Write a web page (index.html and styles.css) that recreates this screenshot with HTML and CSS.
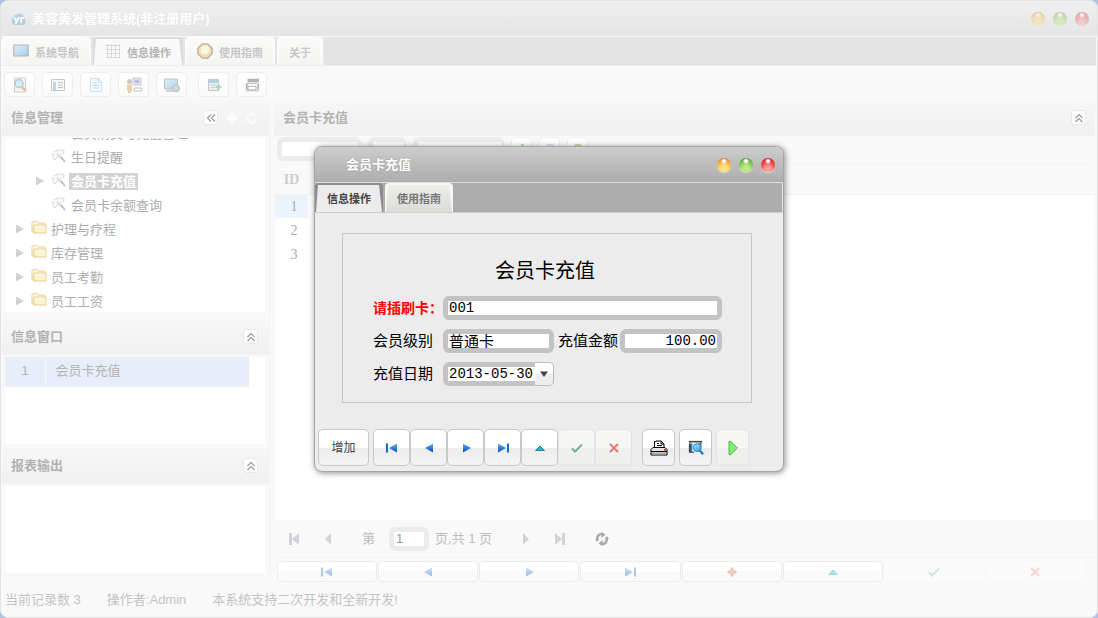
FILE: index.html
```html
<!DOCTYPE html>
<html lang="zh-CN">
<head>
    <meta charset="UTF-8">
    <meta name="viewport" content="width=device-width, initial-scale=1.0">
    <title>美容美发管理系统</title>
    <link rel="stylesheet" href="styles.css">
</head>
<body>

<!-- Shared icons -->
<svg class="defs" aria-hidden="true">
    <defs>
        <linearGradient id="blue" x1="0" y1="0" x2="0" y2="1"><stop offset="0" stop-color="#5cb8f5"/><stop offset="1" stop-color="#0848b8"/></linearGradient>
        <linearGradient id="sky" x1="0" y1="0" x2="1" y2="1"><stop offset="0" stop-color="#b9e6fb"/><stop offset="1" stop-color="#2b93d6"/></linearGradient>
        <linearGradient id="gold" x1="0" y1="0" x2="0" y2="1"><stop offset="0" stop-color="#fffbd0"/><stop offset="1" stop-color="#fbe08a"/></linearGradient>
    </defs>
    <symbol id="i-first" viewBox="0 0 16 16"><path d="M2 3.5h2v9H2z" fill="#1668cc"/><path d="M13 3.5v9L5 8z" fill="url(#blue)"/></symbol>
    <symbol id="i-prev" viewBox="0 0 16 16"><path d="M12 3.5v9L4 8z" fill="url(#blue)"/></symbol>
    <symbol id="i-next" viewBox="0 0 16 16"><path d="M5 3.5v9L13 8z" fill="url(#blue)"/></symbol>
    <symbol id="i-last" viewBox="0 0 16 16"><path d="M12 3.5h2v9h-2z" fill="#1668cc"/><path d="M3 3.5v9L11 8z" fill="url(#blue)"/></symbol>
    <symbol id="i-up" viewBox="0 0 16 16"><path d="M3.5 10.5h9L8 6z" fill="#19b5c4" stroke="#087889" stroke-width=".8"/></symbol>
    <symbol id="i-plus" viewBox="0 0 16 16"><path d="M7 4h2v3h3v2H9v3H7V9H4V7h3z" fill="#f0915a" stroke="#d8401c"/></symbol>
    <symbol id="i-check" viewBox="0 0 16 16"><path d="M3 8.5l3 3L13 4.5" fill="none" stroke="#258a48" stroke-width="2"/></symbol>
    <symbol id="i-cross" viewBox="0 0 16 16"><path d="M4 4l8 8M12 4l-8 8" fill="none" stroke="#d92a1c" stroke-width="2"/></symbol>
    <symbol id="i-search" viewBox="0 0 18 18">
        <path d="M1 1h15v2H1z" fill="#444"/><path d="M3 3h12v10H3z" fill="#fff"/><path d="M1 4h3v10H1zM13 3h2v4h-2z" fill="#3a4046"/><path d="M3 4h2v9H3z" fill="#2789cf"/><path d="M2 13h5v1.5H2z" fill="#555"/>
        <circle cx="10.500" cy="8.500" r="4.500" fill="url(#sky)" stroke="#1876ba"/><path d="M13.500 12l3.500 4" stroke="#1978bd" stroke-width="2.500"/>
    </symbol>
    <symbol id="i-find" viewBox="0 0 16 16"><path d="M2.500 1h11v14h-11z" fill="#eee" stroke="#888"/><circle cx="7" cy="6.500" r="4" fill="#9bdcf5" stroke="#4b7da1" stroke-width="1.500"/><path d="M10 10l4 4" stroke="#d35b28" stroke-width="2.500"/></symbol>
    <symbol id="i-list" viewBox="0 0 16 16"><path d="M1.500 2.500h13v11h-13z" fill="#f5f5f5" stroke="#777"/><path d="M3 5h3v8H3z" fill="#5b9dd0"/><path d="M8 5.500h5M8 8h5M8 10.500h5" stroke="#777"/></symbol>
    <symbol id="i-doc" viewBox="0 0 16 16"><path d="M2.500 1.500h8l3 3v10h-11z" fill="#e9f6ff" stroke="#69bdf0"/><path d="M10 1.500v3.500h3.500M5 6h4M5 8.500h6M5 11h6" fill="none" stroke="#4aa7de"/></symbol>
    <symbol id="i-user" viewBox="0 0 16 16"><path d="M7 1h8v7H7z" fill="#e5e5e5" stroke="#777"/><path d="M8.500 2.500h5v4h-5z" fill="#6b56e0"/><path d="M8 11h7.500v3H8z" fill="#eee" stroke="#777"/><circle cx="3.500" cy="4.500" r="2.500" fill="#777"/><path d="M1 7.500h5V14H5v2H2v-2H1z" fill="#c99433"/></symbol>
    <symbol id="i-screen" viewBox="0 0 16 16"><path d="M.8 2h14.400v11H.8z" fill="url(#sky)" stroke="#555" stroke-width="1.200"/></symbol>
    <symbol id="i-globe" viewBox="0 0 16 16"><path d="M.5 2h13v10H.5z" fill="url(#sky)" stroke="#666"/><path d="M2 14h7" stroke="#777" stroke-width="1.500"/><circle cx="12" cy="11.500" r="3.500" fill="#57a7a3" stroke="#8b58a0"/><path d="M10 11l2-2 1 4z" fill="#e6bf39"/></symbol>
    <symbol id="i-sheet" viewBox="0 0 16 16"><path d="M2.500 2.500h10v11h-10z" fill="#ddd" stroke="#777"/><path d="M2 2h11v4H2z" fill="#438eb6"/><path d="M4 8h6M4 10.500h5" stroke="#888"/><path d="M12.500 7v6M9.500 10h6" stroke="#32a850" stroke-width="2"/></symbol>
    <symbol id="i-window" viewBox="0 0 18 16"><path d="M4 1h13v4H4z" fill="#444"/><path d="M2 6h14v1H2zM2 7h2v6H2zM15 7h2v6h-2z" fill="#444"/><path d="M4.500 9.500h9v4h-9z" fill="#fff" stroke="#333"/><path d="M2 14h15v1H2z" fill="#555"/></symbol>
    <symbol id="i-grid" viewBox="0 0 16 16"><path d="M1 2.500h14M1 6.500h14M1 10.500h14M1 14.500h14M2.500 1v14M6.500 1v14M10.500 1v14M14.500 1v14" stroke="#999" stroke-width=".8"/></symbol>
    <symbol id="i-help" viewBox="0 0 18 18"><path d="M6 1h6l5 5v6l-5 5H6l-5-5V6z" fill="#f5b93e" stroke="#4b4238" stroke-width="1.500"/><circle cx="9" cy="8" r="5" fill="#fff4cd"/></symbol>
    <symbol id="i-folder" viewBox="0 0 16 16"><path d="M1 11.500V3l1-1.500h4L7.500 3H14v9.500H3z" fill="url(#gold)" stroke="#d29b35"/><path d="M3 5h12v8H3z" fill="url(#gold)" stroke="#d29b35"/></symbol>
    <symbol id="i-tool" viewBox="0 0 16 16"><path d="M3 4l2-2 2 1 2-2 2 2 2-1v3l-3 1-2 3-3 1-1 2-2-2 1-2-2-1z" fill="#f4f4f4" stroke="#999" stroke-dasharray="2 1"/><path d="M6 6l5 5" stroke="#aaa" stroke-width="1.500"/><path d="M10 9l4 5" stroke="#8a50dd" stroke-width="1.500"/></symbol>
    <symbol id="i-chevrons" viewBox="0 0 10 10"><path d="M1.500 5L5 1.500 8.500 5M1.500 9L5 5.500 8.500 9" fill="none" stroke="#666" stroke-width="1.200"/></symbol>
    <symbol id="i-chevleft" viewBox="0 0 10 10"><path d="M5 1.500L1.500 5 5 8.500M9 1.500L5.500 5 9 8.500" fill="none" stroke="#666" stroke-width="1.200"/></symbol>
    <symbol id="i-caret" viewBox="0 0 8 10"><path d="M0 0.500L8 5 0 9.500z" fill="currentColor"/></symbol>
    <symbol id="i-refresh" viewBox="0 0 14 14"><path d="M8 2C4 1.500 2 4 2 7.500M6 12c4 .5 6-2 6-5.500" fill="none" stroke="currentColor" stroke-width="2.500"/><path d="M6.500 0l4 2.500-4 3.500zM7.500 14l-4-2.500 4-3.500zM0 7h4.500L2 10zM14 7H9.500L12 4z" fill="currentColor"/></symbol>
    <symbol id="i-print" viewBox="0 0 18 16"><path d="M4.500 7V1.500h2M6 1h5l3 3v3" fill="#fff" stroke="#000"/><path d="M11 1v3h3M7 3.500h2M7 5.500h5" fill="none" stroke="#000"/><path d="M3 7.500h12l2 2v5.500H1V9.500z" fill="#e4e4e4" stroke="#000"/><path d="M1 11.500h16" stroke="#000"/><path d="M2 12.500h14v2H2z" fill="#aaa"/><path d="M14 9h2v1.500h-2z" fill="#e32222"/></symbol>
    <symbol id="i-play" viewBox="0 0 12 18"><path d="M1.500 1.500h2L11 9l-7.500 7.500h-2z" fill="#7af26d" stroke="#5c9b57"/></symbol>
</svg>

<div class="app">
    <header class="titlebar">
        <svg class="logo" viewBox="0 0 16 14" aria-hidden="true"><path d="M4 13a4 4 0 0 1-2-7 3 3 0 0 1 4-3 4 4 0 0 1 7 3 4 4 0 0 1-1 7z" fill="#abd0e5"/><path d="M3 5l2.500 4M8 5l-3.500 7M10 11V6h3" fill="none" stroke="#fff" stroke-width="1.800"/></svg>
        <h1>美容美发管理系统(非注册用户)</h1>
        <div class="lights">
            <button class="light orange" aria-label="最小化"></button>
            <button class="light green" aria-label="最大化"></button>
            <button class="light red" aria-label="关闭"></button>
        </div>
    </header>

    <nav class="tabs">
        <button class="tab"><svg class="icon"><use href="#i-screen"/></svg>系统导航</button>
        <button class="tab active"><svg class="icon"><use href="#i-grid"/></svg>信息操作</button>
        <button class="tab"><svg class="icon"><use href="#i-help"/></svg>使用指南</button>
        <button class="tab">关于</button>
    </nav>

    <div class="toolbar">
        <button aria-label="查找"><svg><use href="#i-find"/></svg></button>
        <button aria-label="列表"><svg><use href="#i-list"/></svg></button>
        <button aria-label="文档"><svg><use href="#i-doc"/></svg></button>
        <button aria-label="用户"><svg><use href="#i-user"/></svg></button>
        <button aria-label="网络"><svg><use href="#i-globe"/></svg></button>
        <button class="spaced" aria-label="添加表单"><svg><use href="#i-sheet"/></svg></button>
        <button aria-label="窗口"><svg><use href="#i-window"/></svg></button>
    </div>

    <div class="workspace">
        <aside class="sidebar">
            <section class="panel grow">
                <div class="panel-head">
                    <h2>信息管理</h2>
                    <button class="mini" aria-label="折叠"><svg><use href="#i-chevleft"/></svg></button>
                    <button class="ghost" aria-label="新增"><svg viewBox="0 0 12 12"><path d="M6 1v10M1 6h10" stroke="#fafafa" stroke-width="4"/></svg></button>
                    <button class="ghost" aria-label="刷新"><svg viewBox="0 0 12 12"><path d="M7 2a4.500 4.500 0 1 0 3 5" fill="none" stroke="#fafafa" stroke-width="2.500"/><path d="M6 0l5 2-4 4z" fill="#fafafa"/></svg></button>
                </div>
                <div class="panel-body">
                    <ul class="tree">
                        <li class="child"><span class="arrow"></span><svg class="node"><use href="#i-tool"/></svg><span class="name">会员消费与充值管理</span></li>
                        <li class="child"><span class="arrow"></span><svg class="node"><use href="#i-tool"/></svg><span class="name">生日提醒</span></li>
                        <li class="child selected"><svg class="arrow"><use href="#i-caret"/></svg><svg class="node"><use href="#i-tool"/></svg><span class="name">会员卡充值</span></li>
                        <li class="child"><span class="arrow"></span><svg class="node"><use href="#i-tool"/></svg><span class="name">会员卡余额查询</span></li>
                        <li><svg class="arrow"><use href="#i-caret"/></svg><svg class="node"><use href="#i-folder"/></svg><span class="name">护理与疗程</span></li>
                        <li><svg class="arrow"><use href="#i-caret"/></svg><svg class="node"><use href="#i-folder"/></svg><span class="name">库存管理</span></li>
                        <li><svg class="arrow"><use href="#i-caret"/></svg><svg class="node"><use href="#i-folder"/></svg><span class="name">员工考勤</span></li>
                        <li><svg class="arrow"><use href="#i-caret"/></svg><svg class="node"><use href="#i-folder"/></svg><span class="name">员工工资</span></li>
                    </ul>
                </div>
            </section>
            <section class="panel">
                <div class="panel-head">
                    <h2>信息窗口</h2>
                    <button class="mini" aria-label="收起信息窗口"><svg><use href="#i-chevrons"/></svg></button>
                </div>
                <div class="panel-body">
                    <table class="windows"><tr><td class="num">1</td><td>会员卡充值</td></tr></table>
                </div>
            </section>
            <section class="panel">
                <div class="panel-head">
                    <h2>报表输出</h2>
                    <button class="mini" aria-label="收起报表输出"><svg><use href="#i-chevrons"/></svg></button>
                </div>
                <div class="panel-body"></div>
            </section>
        </aside>

        <main class="main">
            <div class="panel-head">
                <h2>会员卡充值</h2>
                <button class="mini" aria-label="收起"><svg><use href="#i-chevrons"/></svg></button>
            </div>
            <div class="filters">
                <select class="wide" aria-label="字段"><option></option></select>
                <select class="narrow" aria-label="条件"><option></option></select>
                <select class="value" aria-label="值"><option></option></select>
                <button aria-label="添加条件"><svg viewBox="0 0 12 12"><path d="M5 1h3v4h4v3H1V5h4z" fill="#68db62"/></svg></button>
                <button aria-label="查询"><svg viewBox="0 0 12 12"><circle cx="6" cy="5" r="4" fill="#b9e6fb" stroke="#8cc4e6"/><path d="M9 8l3 3" stroke="#8cc4e6" stroke-width="2"/></svg></button>
                <button aria-label="重新载入"><svg viewBox="0 0 12 12"><path d="M2 8a4 4 0 1 1 8-3" fill="none" stroke="#91ad60" stroke-width="3"/></svg></button>
            </div>
            <div class="grid">
                <table class="records">
                    <thead><tr><th>ID</th><th></th></tr></thead>
                    <tbody>
                        <tr class="current"><td>1</td><td></td></tr>
                        <tr><td>2</td><td></td></tr>
                        <tr><td>3</td><td></td></tr>
                    </tbody>
                </table>
            </div>
            <div class="pager">
                <button aria-label="首页"><svg viewBox="0 0 12 12"><path d="M1 0h3v12H1zM11 0v12L4 6z" fill="currentColor"/></svg></button>
                <button aria-label="上一页"><svg viewBox="0 0 12 12"><path d="M9 0v12L3 6z" fill="currentColor"/></svg></button>
                <label class="page-label" for="page">第</label>
                <input id="page" type="text" value="1">
                <span class="page-total">页,共 1 页</span>
                <button aria-label="下一页"><svg viewBox="0 0 12 12"><path d="M3 0v12l6-6z" fill="currentColor"/></svg></button>
                <button aria-label="末页"><svg viewBox="0 0 12 12"><path d="M8 0h3v12H8zM1 0v12l7-6z" fill="currentColor"/></svg></button>
                <button class="reload" aria-label="刷新列表"><svg><use href="#i-refresh"/></svg></button>
            </div>
            <div class="navigator">
                <button aria-label="首记录"><svg><use href="#i-first"/></svg></button>
                <button aria-label="上一记录"><svg><use href="#i-prev"/></svg></button>
                <button aria-label="下一记录"><svg><use href="#i-next"/></svg></button>
                <button aria-label="末记录"><svg><use href="#i-last"/></svg></button>
                <button aria-label="新增记录"><svg><use href="#i-plus"/></svg></button>
                <button aria-label="编辑记录"><svg><use href="#i-up"/></svg></button>
                <button aria-label="保存记录" disabled><svg><use href="#i-check"/></svg></button>
                <button aria-label="取消编辑" disabled><svg><use href="#i-cross"/></svg></button>
            </div>
        </main>
    </div>

    <footer class="status">
        <span>当前记录数 3</span>
        <span>操作者:Admin</span>
        <span>本系统支持二次开发和全新开发!</span>
    </footer>
</div>

<!-- Recharge dialog -->
<div class="overlay">
    <div class="dialog" role="dialog" aria-labelledby="dialog-title">
        <div class="dialog-title">
            <h2 id="dialog-title">会员卡充值</h2>
            <div class="lights">
                <button class="light orange" aria-label="最小化"></button>
                <button class="light green" aria-label="最大化"></button>
                <button class="light red" aria-label="关闭"></button>
            </div>
        </div>
        <div class="dialog-tabs">
            <button class="active">信息操作</button>
            <button>使用指南</button>
        </div>
        <form class="card-form">
            <h3>会员卡充值</h3>
            <div class="row">
                <label class="required" for="card">请插刷卡：</label>
                <input class="full" id="card" type="text" value="001">
            </div>
            <div class="row">
                <label for="level">会员级别</label>
                <input class="half" id="level" type="text" value="普通卡">
                <label class="second" for="amount">充值金额</label>
                <input class="amount" id="amount" type="text" value="100.00">
            </div>
            <div class="row">
                <label for="date">充值日期</label>
                <div class="date">
                    <input id="date" type="text" value="2013-05-30">
                    <button type="button" aria-label="选择日期"><svg viewBox="0 0 8 6"><path d="M0 0.500h8L4 6z" fill="#444"/></svg></button>
                </div>
            </div>
        </form>
        <div class="actions">
            <button class="add">增加</button>
            <div class="group">
                <button aria-label="首条"><svg><use href="#i-first"/></svg></button>
                <button aria-label="上一条"><svg><use href="#i-prev"/></svg></button>
                <button aria-label="下一条"><svg><use href="#i-next"/></svg></button>
                <button aria-label="末条"><svg><use href="#i-last"/></svg></button>
                <button aria-label="编辑"><svg><use href="#i-up"/></svg></button>
                <button aria-label="保存" disabled><svg><use href="#i-check"/></svg></button>
                <button aria-label="取消" disabled><svg><use href="#i-cross"/></svg></button>
            </div>
            <div class="group apart">
                <button aria-label="打印"><svg><use href="#i-print"/></svg></button>
                <button aria-label="预览"><svg><use href="#i-search"/></svg></button>
                <button class="run" aria-label="执行"><svg><use href="#i-play"/></svg></button>
            </div>
        </div>
    </div>
</div>

</body>
</html>
```
FILE: styles.css
```css
* {
    box-sizing: border-box;
}
body {
    margin: 0;
    background: #afc4dc;
    font-family: "Liberation Sans", "Noto Sans CJK SC", sans-serif;
    font-size: 13px;
    line-height: 18px;
}
h1, h2, h3, ul {
    margin: 0;
    padding: 0;
}
h1, h2 {
    font-size: 13px;
}
button, input, select {
    font: inherit;
    margin: 0;
    padding: 0;
}
button {
    display: flex;
    align-items: center;
    justify-content: center;
    border: none;
    background: none;
}
svg {
    display: block;
    width: 16px;
    height: 16px;
    flex: none;
}
.defs {
    position: absolute;
    width: 0;
    height: 0;
}

/* Main window */
.app {
    display: flex;
    flex-direction: column;
    height: 100vh;
    overflow: hidden;
    background: #f9f9f9;
    border: 1px solid #e2e2e2;
    border-radius: 8px;
}
.titlebar {
    display: flex;
    align-items: center;
    height: 36px;
    padding: 0 8px 0 10px;
    background: linear-gradient(#efefef, #e5e5e5);
    border-bottom: 1px solid #fafafa;
    flex: none;
}
.titlebar h1 {
    margin-left: 5px;
    color: #fff;
    text-shadow: 0 0 1px #ddd;
}
.lights {
    display: flex;
    gap: 8px;
    margin-left: auto;
}
.light {
    width: 14px;
    height: 14px;
    border-radius: 50%;
    box-shadow: 0 1px 1px rgba(255, 255, 255, 0.6);
}
.light.orange {
    background: radial-gradient(circle at 50% 22%, #fff 0 8%, transparent 24%), radial-gradient(circle at 50% 80%, #ffe27b 25%, #ee9f3f 70%, #8b3018 105%);
}
.light.green {
    background: radial-gradient(circle at 50% 22%, #fff 0 8%, transparent 24%), radial-gradient(circle at 50% 80%, #bcea83 25%, #6fb547 70%, #1d581a 105%);
}
.light.red {
    background: radial-gradient(circle at 50% 22%, #fff 0 8%, transparent 24%), radial-gradient(circle at 50% 80%, #ff9b95 20%, #ed3833 65%, #6e0808 105%);
}
.titlebar .light {
    opacity: 0.35;
}
.logo {
    opacity: 0.9;
}
.tabs {
    display: flex;
    gap: 2px;
    height: 29px;
    margin-right: 1px;
    background: #e4e4e4;
    border-bottom: 1px solid #eee;
    flex: none;
}

/* Tabs are a rounded frame with a tapered face inside it */
.tab, .dialog-tabs button {
    position: relative;
    isolation: isolate;
    border-radius: 4px 4px 0 0;
    background: #fcfcfc;
    font-size: 11px;
    font-weight: bold;
}
.tab::before, .dialog-tabs button::before {
    content: "";
    position: absolute;
    inset: 2px 0 0;
    z-index: -1;
    clip-path: polygon(3px 0, calc(100% - 4px) 0, calc(100% - 1px) 100%, 1px 100%);
    background: linear-gradient(#fafaf9, #f4f4f3);
}
.tab {
    gap: 6px;
    padding: 4px 12px 0;
    color: #c6c6c6;
}
.tab.active {
    color: #b4b4b4;
    background: #dcdbde;
}
.tab.active::before {
    background: #f9f9f9;
}
.tab .icon {
    opacity: 0.4;
    margin-bottom: 4px;
}
.toolbar {
    display: flex;
    gap: 7px;
    height: 34px;
    padding: 6px 3px 0;
    flex: none;
}
.toolbar button {
    width: 31px;
    height: 25px;
    background: linear-gradient(#fff, #fafafa);
    border: 1px solid #ededed;
    border-radius: 4px;
}
.toolbar .spaced {
    margin-left: 4px;
}
.toolbar svg {
    opacity: 0.4;
}
.workspace {
    display: flex;
    gap: 4px;
    flex: 1;
    min-height: 0;
    padding: 0 2px 0 1px;
}
.sidebar {
    display: flex;
    flex-direction: column;
    gap: 4px;
    width: 268px;
    padding-bottom: 9px;
    border-right: 1px solid #f3f3f3;
    flex: none;
}
.panel {
    display: flex;
    flex-direction: column;
    height: 125px;
}
.panel.grow {
    flex: 1;
    min-height: 0;
    padding-bottom: 3px;
}
.panel-head {
    display: flex;
    align-items: center;
    gap: 8px;
    height: 36px;
    padding: 0 9px;
    background: linear-gradient(#f7f7f7, #f0f0f0);
    border-bottom: 1px solid #f4f4f4;
    color: #b2b2b2;
    flex: none;
}
.sidebar .panel-head {
    padding: 0 11px 0 9px;
}
.panel-head h2 {
    margin-right: auto;
}
.mini {
    width: 15px;
    height: 15px;
    background: #fdfdfd;
    border: 1px solid #e8e8e8;
    border-radius: 3px;
}
.mini svg {
    width: 10px;
    height: 10px;
    opacity: 0.65;
}
.ghost svg {
    width: 12px;
    height: 12px;
}
.panel-body {
    flex: 1;
    min-height: 0;
    margin: 2px 4px 0 3px;
    overflow: hidden;
    background: #fff;
}
.tree {
    list-style: none;
    margin-top: -17px;
}
.tree li {
    display: flex;
    align-items: center;
    height: 24px;
    padding-left: 11px;
    color: #adadad;
}
.tree .child {
    padding-left: 31px;
}
.arrow {
    width: 8px;
    height: 10px;
    color: #d2d2d2;
}
.node {
    margin: 0 2px 2px 7px;
    opacity: 0.5;
}
.name {
    padding: 0 2px;
    line-height: 17px;
}
.selected .name {
    background: #d2d2d2;
    color: #fff;
    font-weight: bold;
}
.windows {
    width: 244px;
    border-collapse: collapse;
    color: #b4b4b4;
}
.windows td {
    height: 30px;
    padding: 0 10px 2px;
    background: #e7eef9;
}
.windows .num {
    width: 40px;
    padding: 0 0 2px;
    text-align: center;
    border-right: 1px solid #f8f8f8;
}
.main {
    display: flex;
    flex-direction: column;
    flex: 1;
    min-width: 0;
}
.filters {
    display: flex;
    gap: 7px;
    height: 28px;
    padding: 1px 3px;
    flex: none;
}
.filters select {
    appearance: none;
    height: 24px;
    background: #fff;
    border: 5px solid #ececec;
    border-right-width: 2px;
    border-radius: 6px;
}
.filters .wide {
    width: 84px;
}
.filters .narrow {
    width: 38px;
}
.filters .value {
    width: 91px;
}
.filters button {
    width: 21px;
    height: 24px;
    background: #fff;
    border: 1px solid #ededed;
    border-radius: 4px;
}
.filters svg {
    width: 12px;
    height: 12px;
    opacity: 0.5;
}
.grid {
    flex: 1;
    min-height: 0;
    margin: 0 1px;
    background: #fff;
}
.records {
    width: 100%;
    border-collapse: collapse;
    table-layout: fixed;
    font-family: "Liberation Serif", "Noto Sans CJK SC", serif;
    font-size: 14px;
    color: #aaa;
}
.records th {
    height: 30px;
    padding: 0;
    background: #f9f9f9;
    border-top: 1px solid #f4f4f4;
    border-bottom: 1px solid #f4f4f4;
    color: #cdcdcd;
}
.records th:first-child, .records td:first-child {
    width: 33px;
}
.records td {
    height: 24px;
    padding: 0 0 0 5px;
    text-align: center;
    border-bottom: 1px solid #fdfdfd;
}
.records .current td:first-child {
    background: #ebf4fc;
}
.pager {
    display: flex;
    align-items: center;
    height: 38px;
    padding-left: 14px;
    border-bottom: 1px solid #f4f4f4;
    color: #bcbcbc;
    flex: none;
}
.pager button {
    width: 34px;
    height: 20px;
    justify-content: flex-start;
    color: #d0d4da;
}
.pager button svg {
    width: 12px;
    height: 12px;
}
.pager .page-label {
    padding: 0 14px 0 6px;
}
.pager input {
    width: 40px;
    height: 24px;
    padding-left: 2px;
    background: #fff;
    border: 5px solid #ececec;
    border-radius: 6px;
    color: #999;
}
.pager .page-total {
    width: 85px;
    margin-left: 6px;
}
.pager .reload {
    margin-left: 7px;
    color: #aaa;
}
.pager .reload svg {
    width: 14px;
    height: 14px;
}
.navigator {
    display: flex;
    gap: 1px;
    padding: 3px 10px 0 3px;
    flex: none;
}
.navigator button {
    flex: 1;
    height: 21px;
    background: linear-gradient(#fff 50%, #fafafa 50%);
    border: 1px solid #ececec;
    border-radius: 4px;
}
.navigator svg {
    opacity: 0.35;
}
.navigator button:disabled {
    background: #fbfbfb;
    border-color: #f9f9f9;
}
.navigator button:disabled svg {
    opacity: 0.18;
}
.status {
    display: flex;
    align-items: center;
    gap: 26px;
    height: 35px;
    padding-left: 4px;
    color: #c4c4c4;
    flex: none;
}

/* Dialog */
.overlay {
    position: absolute;
    inset: 0;
    display: flex;
    align-items: center;
    justify-content: center;
}
.dialog {
    width: 470px;
    background: #ececec;
    border: 1px solid #a5a5a5;
    border-radius: 8px;
    box-shadow: 1px 1px 6px rgba(0, 0, 0, 0.45);
    overflow: hidden;
}
.dialog-title {
    display: flex;
    align-items: center;
    height: 36px;
    padding: 0 8px 0 31px;
    background: linear-gradient(#cdcdcd, #adadad);
    border-bottom: 1px solid #dedede;
}
.dialog-title h2 {
    color: #fff;
    text-shadow: 0 0 2px #999;
}
.dialog-tabs {
    display: flex;
    gap: 2px;
    height: 30px;
    background: #adadad;
    border-right: 1px solid #dedede;
    border-bottom: 1px solid #d0d0d0;
}
.dialog-tabs button {
    width: 68px;
    padding-top: 3px;
    background: #f6f6f4;
    color: #777;
}
.dialog-tabs button::before {
    background: linear-gradient(#ededeb, #dcdcd8);
}
.dialog-tabs .active {
    background: #8f8a93;
    color: #444;
}
.dialog-tabs .active::before {
    background: #ececec;
}
.card-form {
    margin: 20px 31px 0 27px;
    padding: 23px 29px 16px 30px;
    border: 1px solid #c6c6c6;
    color: #000;
    font-size: 15px;
}
.card-form h3 {
    margin-bottom: 11px;
    padding-right: 5px;
    font-size: 20px;
    font-weight: normal;
    line-height: 28px;
    text-align: center;
}
.row {
    display: flex;
    align-items: center;
    height: 24px;
    margin-bottom: 9px;
}
.row:last-child {
    margin-bottom: 0;
}
.row label {
    width: 70px;
    white-space: nowrap;
    flex: none;
}
.row .required {
    color: #f00;
    font-size: 14px;
    font-weight: bold;
}
.row .second {
    width: 62px;
    margin-left: 4px;
}
.row input {
    height: 24px;
    min-width: 0;
    padding: 0 1px;
    background: #fff;
    border: 5px solid #c2c3c5;
    border-radius: 6px;
    color: #000;
    font-family: "Liberation Mono", "Noto Sans CJK SC", monospace;
    font-size: 14px;
}
.row .full {
    flex: 1;
}
.row .half {
    width: 111px;
    font-size: 15px;
}
.row .amount {
    flex: 1;
    text-align: right;
}
.date {
    display: flex;
    width: 111px;
}
.date input {
    flex: 1;
    border-right: none;
    border-radius: 6px 0 0 6px;
}
.date button {
    width: 19px;
    height: 24px;
    background: linear-gradient(#fff 50%, #eee 50%);
    border: 1px solid #bbb;
    border-left: none;
    border-radius: 0 5px 5px 0;
}
.date svg {
    width: 8px;
    height: 6px;
}
.actions {
    display: flex;
    gap: 4px;
    margin-top: 26px;
    padding: 0 3px 5px;
}
.actions button {
    width: 37px;
    height: 37px;
    background: linear-gradient(#fff 50%, #ececec 50%, #f4f4f4);
    border: 1px solid #c8c8c8;
    border-radius: 5px;
}
.actions .add {
    width: 51px;
    color: #444;
    font-size: 12px;
}
.group {
    display: flex;
}
.actions button:disabled, .actions .run {
    background: linear-gradient(#f6f6f4 50%, #efefee 50%);
    border-color: #e3e3e3;
}
.actions button:disabled svg {
    opacity: 0.6;
}
.group.apart {
    gap: 4px;
    margin-left: 6px;
}
.group.apart button {
    width: 33px;
}
.group.apart svg {
    width: 18px;
}
```
